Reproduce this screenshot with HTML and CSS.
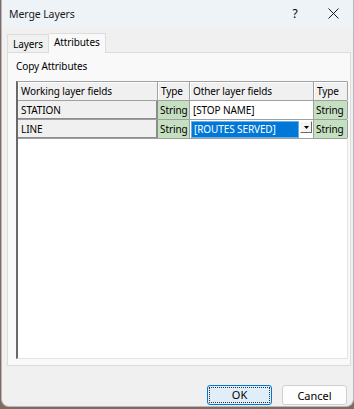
FILE: index.html
```html
<!DOCTYPE html>
<html lang="en">
<head>
    <meta charset="UTF-8">
    <title>Merge Layers</title>
    <link rel="stylesheet" href="styles.css">
</head>
<body>
    <div class="window">
        <div class="titlebar">
            <span class="title">Merge Layers</span>
            <span class="help">?</span>
            <span class="close">
                <svg width="11" height="11" viewBox="0 0 11 11"><path d="M0.5 0.5L10.5 10.5M10.5 0.5L0.5 10.5" stroke="#1a1a1a" stroke-width="1"/></svg>
            </span>
        </div>
        <div class="content">
            <div class="tabs">
                <div class="tab">Layers</div>
                <div class="tab active">Attributes</div>
            </div>
            <div class="panel">
                <div class="caption">Copy Attributes</div>
                <div class="grid">
                    <div class="row">
                        <div class="cell head">Working layer fields</div>
                        <div class="cell head">Type</div>
                        <div class="cell head">Other layer fields</div>
                        <div class="cell head">Type</div>
                    </div>
                    <div class="row">
                        <div class="cell rowhead">STATION</div>
                        <div class="cell type">String</div>
                        <div class="cell field">[STOP NAME]</div>
                        <div class="cell type">String</div>
                    </div>
                    <div class="row">
                        <div class="cell rowhead">LINE</div>
                        <div class="cell type">String</div>
                        <div class="cell combo">
                            <span class="combo-text">[ROUTES SERVED]</span>
                            <span class="combo-btn">
                                <svg width="5" height="3" viewBox="0 0 5 3"><path d="M0 0H5L2.5 3Z" fill="#000"/></svg>
                            </span>
                        </div>
                        <div class="cell type">String</div>
                    </div>
                </div>
            </div>
            <div class="buttons">
                <button class="btn default"><span>OK</span></button>
                <button class="btn">Cancel</button>
            </div>
        </div>
    </div>
</body>
</html>
```

FILE: styles.css
```css
body {
    margin: 0;
    background: #7d6a62;
    font-family: "Noto Sans", "Open Sans", sans-serif;
    font-size: 10px;
    letter-spacing: -0.1px;
    color: #000;
    height: 409px;
    overflow: hidden;
}

.window {
    margin-left: 1px;
    width: 351px;
    height: 406px;
    background: #f0f0f0;
    border: 1px solid #b9b9b9;
    border-top: none;
    border-radius: 0 0 8px 8px;
    display: flex;
    flex-direction: column;
    overflow: hidden;
}

.titlebar {
    height: 27px;
    background: #eef3f8;
    display: flex;
    align-items: center;
    padding-left: 7px;
}

.title {
    flex: 1;
    font-size: 10.5px;
    color: #1a1a1a;
}

.help {
    width: 20px;
    margin-right: 8px;
    text-align: center;
    font-size: 12px;
}

.close {
    width: 40px;
    display: flex;
    justify-content: center;
}

.content {
    flex: 1;
    display: flex;
    flex-direction: column;
    padding: 6px 2px 0 5px;
}

.tabs {
    display: flex;
    align-items: flex-end;
    height: 19px;
}

.tab {
    height: 17px;
    line-height: 18px;
    padding: 0 5px;
    border: 1px solid #dcdcdc;
    border-bottom: none;
    background: #f0f0f0;
}

.tab.active {
    height: 19px;
    line-height: 17px;
    background: #f9f9f9;
    border-left: none;
    margin-bottom: -1px;
    position: relative;
    padding: 0 5px 0 5px;
}

.panel {
    height: 300px;
    background: #f9f9f9;
    border: 1px solid #dcdcdc;
    padding: 6px 2px 6px 8px;
    display: flex;
    flex-direction: column;
}

.caption {
    height: 22px;
    line-height: 15px;
}

.grid {
    flex: 1;
    background: #fff;
    border-top: 1px solid #a0a0a0;
    border-left: 2px solid #696969;
    border-right: 1px solid #e3e3e3;
    border-bottom: 1px solid #e3e3e3;
}

.row {
    display: grid;
    grid-template-columns: 140px 32px 124px 34px;
    height: 18px;
    border-bottom: 1px solid #a0a0a0;
}

.cell {
    padding-left: 3px;
    line-height: 18px;
    white-space: nowrap;
    overflow: hidden;
    border-right: 1px solid #a0a0a0;
}

.head {
    background: #f0f0f0;
    box-shadow: inset 1px 1px 0 #fff;
}

.rowhead {
    background: #f0f0f0;
    border-right: 2px solid #8c8c8c;
    border-bottom: 1px solid #8c8c8c;
    height: 17px;
}

.type {
    background: #c5dfc1;
    padding-left: 2px;
}

.field {
    background: #fff;
}

.combo {
    display: flex;
    padding: 1px 0 0 1px;
    background: #fff;
}

.combo-text {
    width: 108px;
    height: 17px;
    line-height: 15px;
    padding-left: 2px;
    background: #0078d7;
    color: #fff;
    border: 1px solid #6aaee6;
    box-sizing: border-box;
}

.combo-btn {
    width: 12px;
    height: 12px;
    margin-left: 1px;
    background: #f4f4f4;
    border: 1px solid #fff;
    border-right-color: #6a6a6a;
    border-bottom-color: #6a6a6a;
    display: flex;
    align-items: center;
    justify-content: center;
    box-sizing: border-box;
}

.buttons {
    display: flex;
    justify-content: flex-end;
    gap: 10px;
    padding: 19px 4px 0 0;
}

.btn {
    width: 65px;
    height: 20px;
    font-family: inherit;
    font-size: 11px;
    background: #fdfdfd;
    border: 1px solid #d0d0d0;
    border-radius: 3px;
    padding: 0;
}

.btn.default {
    background: #e0eef9;
    border-color: #0078d7;
}

.btn.default span {
    display: block;
    margin: 1px;
    line-height: 14px;
    border: 1px dotted #333;
}
```
